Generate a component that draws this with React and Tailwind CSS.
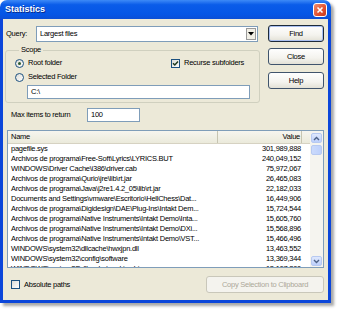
import React from 'react';

const rows = [
  ['pagefile.sys', '301,989,888'],
  ['Archivos de programa\\Free-Soft\\Lyrics\\LYRICS.BUT', '240,049,152'],
  ['WINDOWS\\Driver Cache\\i386\\driver.cab', '75,972,067'],
  ['Archivos de programa\\Qurio\\jre\\lib\\rt.jar', '26,465,083'],
  ['Archivos de programa\\Java\\j2re1.4.2_05\\lib\\rt.jar', '22,182,033'],
  ['Documents and Settings\\vmware\\Escritorio\\HellChess\\Dat...', '16,449,906'],
  ['Archivos de programa\\Digidesign\\DAE\\Plug-Ins\\Intakt Dem...', '15,724,544'],
  ['Archivos de programa\\Native Instruments\\Intakt Demo\\Inta...', '15,605,760'],
  ['Archivos de programa\\Native Instruments\\Intakt Demo\\DXi...', '15,568,896'],
  ['Archivos de programa\\Native Instruments\\Intakt Demo\\VST...', '15,466,496'],
  ['WINDOWS\\system32\\dllcache\\hwxjpn.dll', '13,463,552'],
  ['WINDOWS\\system32\\config\\software', '13,369,344'],
  ['WINDOWS\\system32\\dllcache\\cookies.bin', '13,107,200'],
];

function XpButton({ children, main, disabled, className = '' }) {
  return (
    <div
      className={`h-[17px] flex items-center justify-center rounded-[3px] border bg-[linear-gradient(#fefefe,#f4f3ee_60%,#e3e1d6)]
        ${main ? 'border-[#1d2a3a] shadow-[inset_0_0_0_1px_#a9bff0]' : 'border-[#40546c]'}
        ${disabled ? 'border-[#c9c7ba] text-[#aca899] bg-none bg-[#f4f3ee]' : 'text-black'}
        ${className}`}
    >
      {children}
    </div>
  );
}

function Check({ checked }) {
  return (
    <div className="w-[9px] h-[9px] shrink-0 border border-[#1c5180] bg-[linear-gradient(135deg,#dcdcd6,#fff)] flex items-center justify-center">
      {checked && (
        <svg width="7" height="7" viewBox="0 0 7 7">
          <path d="M1 3.2 L2.8 5 L6 1.6" fill="none" stroke="#1f3b1f" strokeWidth="1.5" />
        </svg>
      )}
    </div>
  );
}

function Radio({ checked }) {
  return (
    <div className="w-[9px] h-[9px] shrink-0 rounded-full border border-[#1c5180] bg-[linear-gradient(135deg,#dcdcd6,#fff)] flex items-center justify-center">
      {checked && <div className="w-[3px] h-[3px] rounded-full bg-[#2d5a2d]" />}
    </div>
  );
}

function Arrow({ down }) {
  return (
    <div className="h-[10px] w-[11px] rounded-[2px] border border-[#b7c9f1] bg-[linear-gradient(#dfe8fd,#bccffb)] flex items-center justify-center">
      <svg width="7" height="5" viewBox="0 0 7 5">
        <path d={down ? 'M1 1 L3.5 3.5 L6 1' : 'M1 4 L3.5 1.5 L6 4'} fill="none" stroke="#4d6185" strokeWidth="1.4" />
      </svg>
    </div>
  );
}

export default function App() {
  return (
    <div className="w-[340px] h-[311px] bg-white text-[7.5px] tracking-[-0.25px] text-black font-['Liberation_Sans',Arial,sans-serif]">
      <div className="w-[331px] h-[303px] flex flex-col rounded-t-[7px] shadow-[3px_3px_3px_rgba(0,0,0,0.35)]">
        {/* Title bar */}
        <div className="h-[19px] flex items-center pl-[5px] pr-[4px] rounded-t-[7px] bg-[linear-gradient(#3d8af7,#0a5ce9_25%,#0556e6_75%,#0b4fd6)]">
          <span className="text-white font-bold text-[9px] tracking-normal [text-shadow:1px_1px_0_#0a2a8a]">Statistics</span>
          <div className="ml-auto w-[14px] h-[14px] rounded-[3px] border border-white bg-[linear-gradient(135deg,#f08d6e,#e2502f_60%,#c63a1c)] flex items-center justify-center">
            <svg width="8" height="8" viewBox="0 0 8 8">
              <path d="M1.5 1.5 L6.5 6.5 M6.5 1.5 L1.5 6.5" stroke="white" strokeWidth="1.6" />
            </svg>
          </div>
        </div>

        {/* Body */}
        <div className="flex-1 flex flex-col bg-[#ece9d8] border-x-[3px] border-b-[3px] border-[#0b46da]">
          <div className="flex items-start">
            {/* Left column */}
            <div className="w-[259px] shrink-0 flex flex-col">
              <div className="mt-[7px] h-[16px] flex items-center">
                <div className="w-[33px] shrink-0 pl-[3px]">Query:</div>
                <div className="w-[222px] h-[16px] border border-[#7f9db9] bg-white flex items-center pl-[3px] pr-[1px]">
                  <span>Largest files</span>
                  <div className="ml-auto w-[10px] h-[12px] border border-[#9a9a9a] bg-[#f1efe6] flex items-center justify-center">
                    <svg width="6" height="4" viewBox="0 0 6 4">
                      <path d="M0 0 H6 L3 3.5 Z" fill="#000" />
                    </svg>
                  </div>
                </div>
              </div>

              <fieldset className="ml-[2px] mt-[3px] w-[254px] border border-[#d0d0bf] rounded-[3px] px-[9px] pb-[3px]">
                <legend className="ml-[4px] px-[2px] leading-[10px]">Scope</legend>
                <div className="flex items-center mt-[3px] h-[10px]">
                  <Radio checked />
                  <div className="ml-[4px] w-[143px] shrink-0">Root folder</div>
                  <Check checked />
                  <div className="ml-[4px]">Recurse subfolders</div>
                </div>
                <div className="flex items-center mt-[4px] h-[10px]">
                  <Radio />
                  <div className="ml-[4px]">Selected Folder</div>
                </div>
                <div className="ml-[12px] mt-[3px] w-[223px] h-[14px] border border-[#7f9db9] bg-white flex items-center pl-[3px]">
                  C:\
                </div>
              </fieldset>

              <div className="mt-[5px] h-[14px] flex items-center">
                <div className="w-[84px] shrink-0 pl-[8px]">Max items to return</div>
                <div className="w-[53px] shrink-0 h-[14px] border border-[#7f9db9] bg-white flex items-center pl-[3px]">100</div>
              </div>
            </div>

            {/* Buttons */}
            <div className="ml-[6px] w-[56px] flex flex-col">
              <XpButton main className="mt-[6px]">Find</XpButton>
              <XpButton className="mt-[6px]">Close</XpButton>
              <XpButton className="mt-[7px]">Help</XpButton>
            </div>
          </div>

          {/* List */}
          <div className="ml-[4px] mt-[8px] w-[317px] h-[138px] border border-[#7f9db9] bg-white flex overflow-hidden">
            <div className="flex-1 flex flex-col min-w-0">
              <div className="h-[13px] shrink-0 flex bg-[linear-gradient(#f6f5ef,#ebeadb)] border-b border-[#d6d2c2]">
                <div className="w-[210px] pl-[3px] flex items-center border-r border-[#c7c5b2]">Name</div>
                <div className="w-[84px] pr-[1px] flex items-center justify-end border-r border-[#c7c5b2]">Value</div>
              </div>
              {rows.map(([name, value]) => (
                <div key={name} className="h-[10px] flex items-center shrink-0">
                  <div className="w-[210px] pl-[3px] whitespace-nowrap">{name}</div>
                  <div className="w-[84px] pr-[1px] text-right">{value}</div>
                </div>
              ))}
            </div>
            {/* Scrollbar */}
            <div className="w-[13px] bg-[#f5f4ef] flex flex-col items-center pt-[2px] pb-[1px]">
              <Arrow />
              <div className="mt-[2px] h-[10px] w-[11px] rounded-[2px] border border-[#b7c9f1] bg-[linear-gradient(90deg,#cbdafc,#bdd0fb)]" />
              <div className="mt-auto">
                <Arrow down />
              </div>
            </div>
          </div>

          {/* Bottom row */}
          <div className="mt-[8px] flex items-center">
            <div className="ml-[8px]">
              <Check />
            </div>
            <div className="ml-[4px]">Absolute paths</div>
            <XpButton disabled className="ml-auto mr-[4px] w-[118px]">Copy Selection to Clipboard</XpButton>
          </div>
        </div>
      </div>
    </div>
  );
}
